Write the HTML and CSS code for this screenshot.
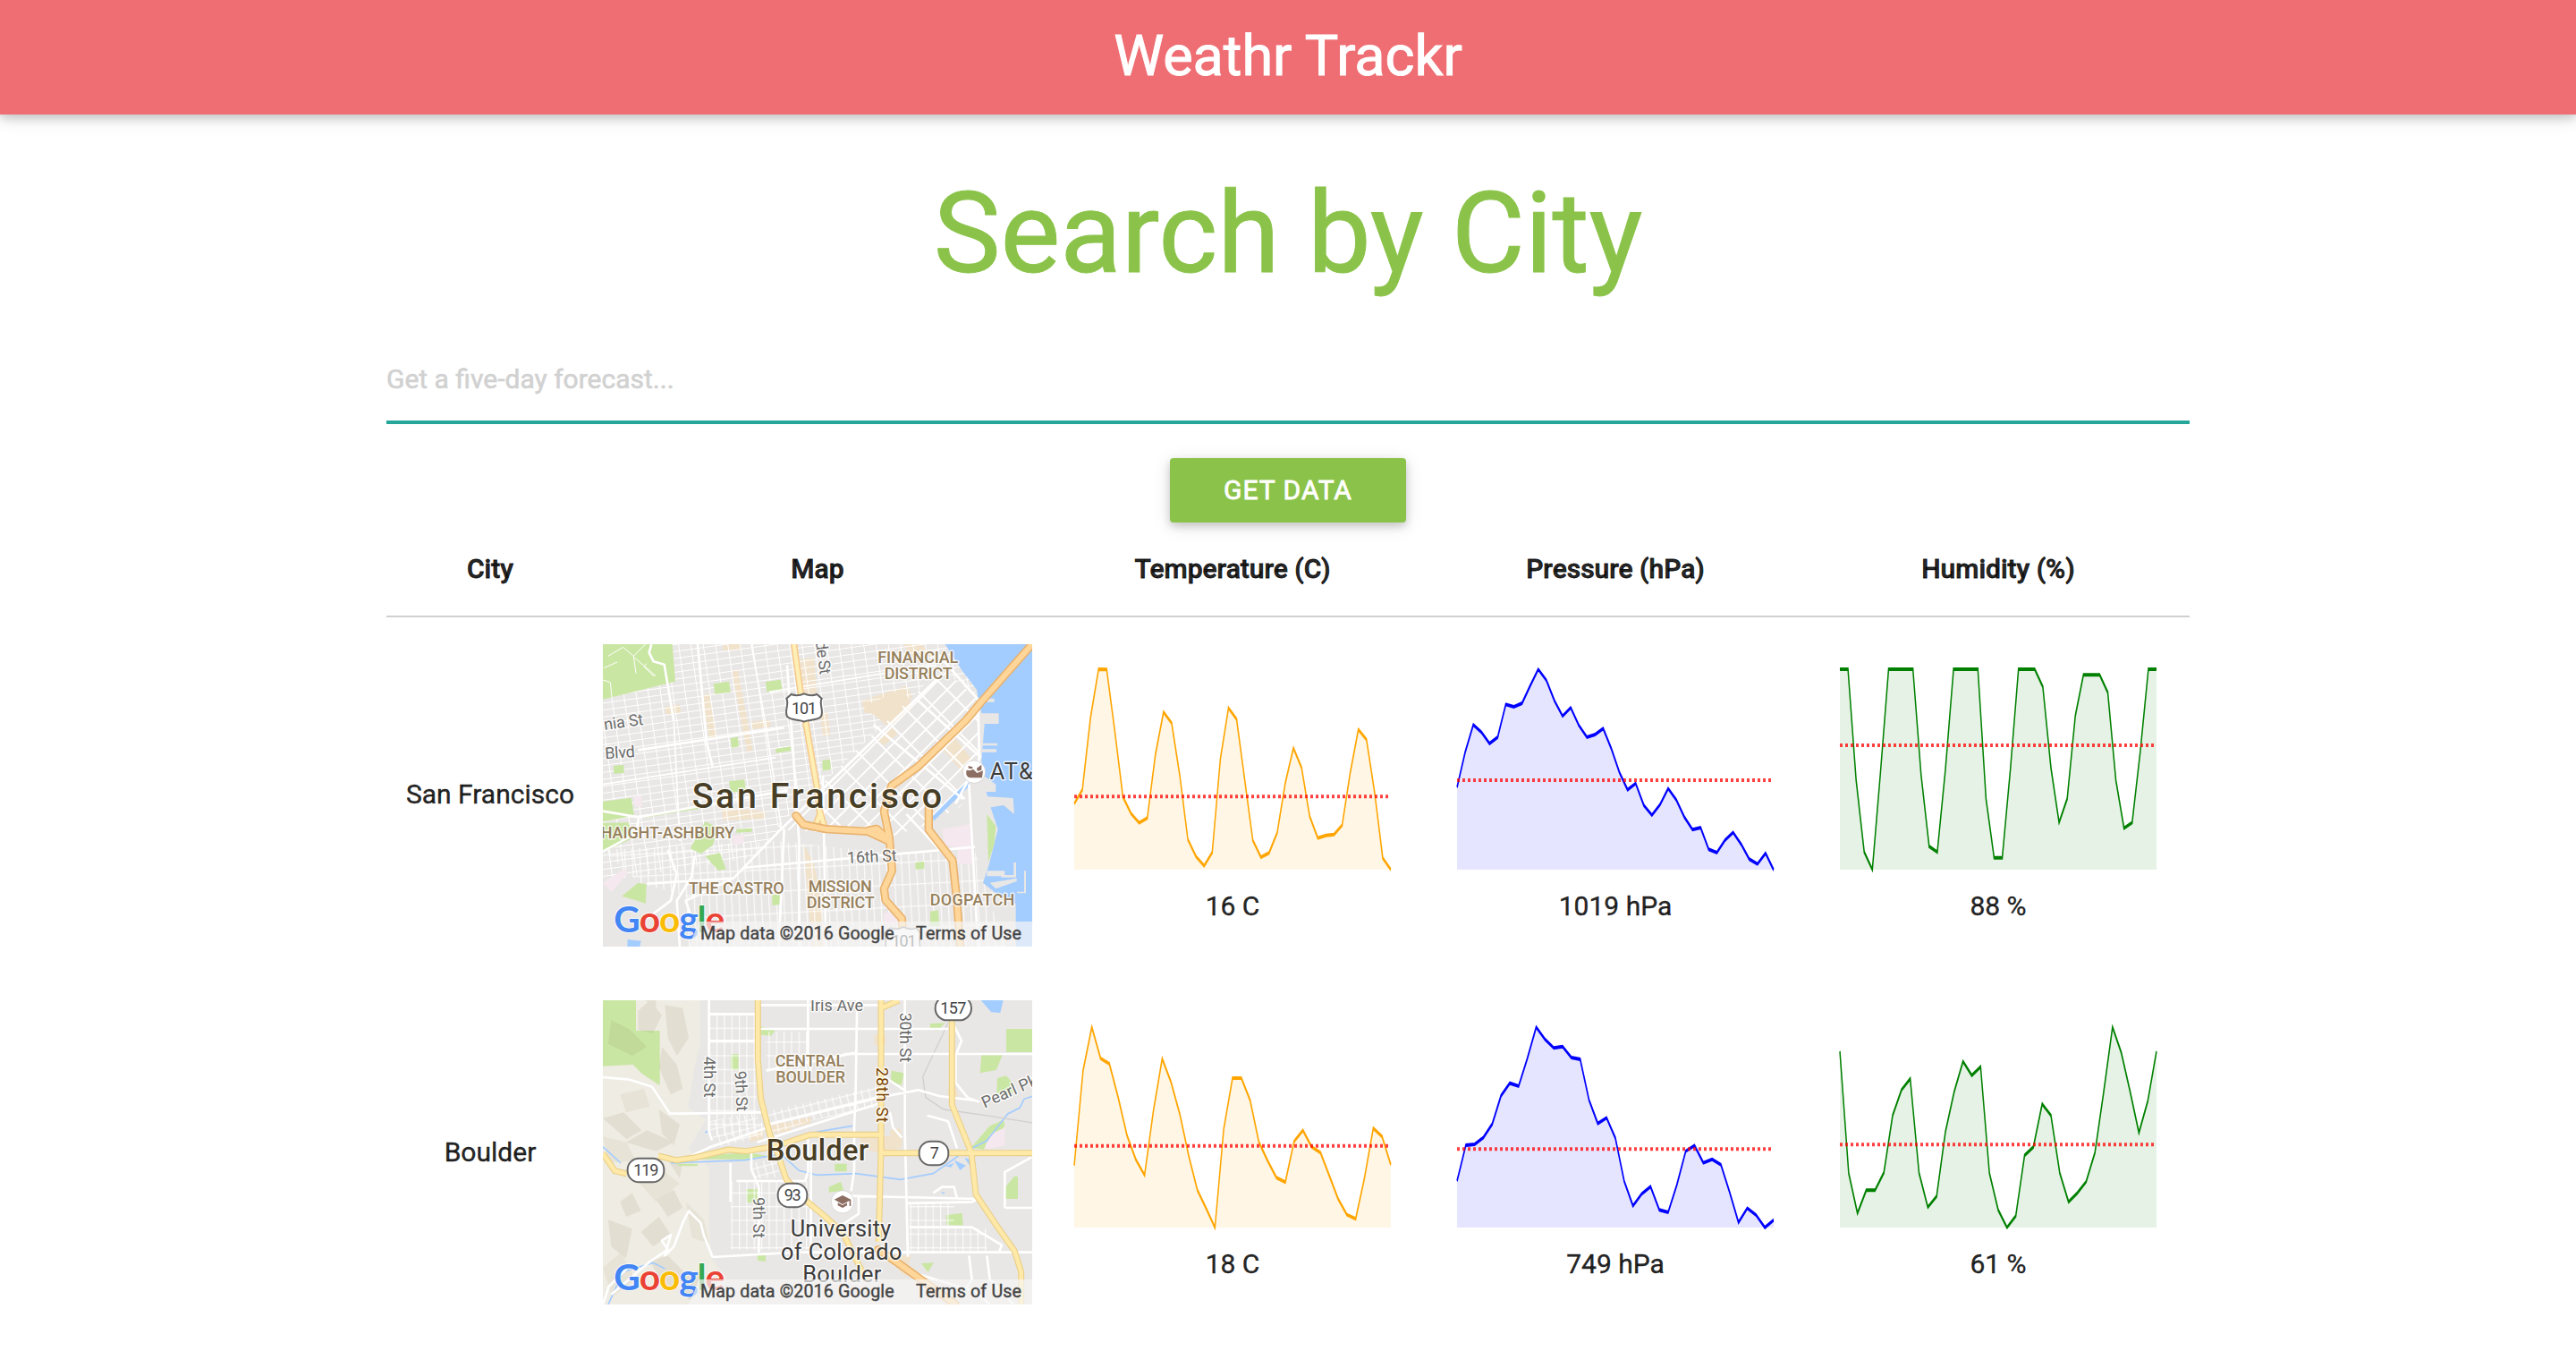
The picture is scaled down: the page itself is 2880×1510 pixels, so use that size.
FILE: index.html
```html
<!DOCTYPE html>
<html lang="en">
<head>
<meta charset="utf-8">
<title>Weathr Trackr</title>
<link rel="stylesheet" href="styles.css">
</head>
<body>
<header class="nav"><a class="brand">Weathr Trackr</a></header>
<main class="container">
  <h1 class="title">Search by City</h1>
  <form class="search">
    <input class="search-input" type="text" placeholder="Get a five-day forecast...">
    <button class="btn" type="button">Get Data</button>
  </form>
  <section class="table">
    <div class="row head">
      <div>City</div><div>Map</div><div>Temperature (C)</div><div>Pressure (hPa)</div><div>Humidity (%)</div>
    </div>
    <div class="row">
      <div class="city">San Francisco</div>
      <div class="map map-first">
        <svg class="map-svg" viewBox="42 30 1440 1014" preserveAspectRatio="none">
          <defs>
            <pattern id="gridNW" width="41" height="23" patternUnits="userSpaceOnUse" patternTransform="rotate(-8)"><path d="M0 1.5H41M1.5 0V23" class="street"/></pattern>
            <pattern id="gridSoma" width="72" height="44" patternUnits="userSpaceOnUse" patternTransform="translate(1000 500) rotate(-45)"><path d="M0 3H72M3 0V44" class="street mid"/></pattern>
            <pattern id="gridS" width="25" height="74" patternUnits="userSpaceOnUse" patternTransform="rotate(-3)"><path d="M0 2H25M2 0V74" class="street"/></pattern>
          </defs>
          <rect x="42" y="30" width="1440" height="1014" fill="#e9e7e5"/>
          <g fill="#f1e2cb">
            <path d="M445 30h60v20h-60zM375 200l25-5 25 150-25 5zM475 120l20-4 50 270-20 4zM250 240l50-8 4 28-50 5zM910 220l150-50 60 100-40 30-70-30-90-10zM705 80l45-5 10 120-45 5zM770 260l25-4 10 80-25 4zM880 410l50-40 25 20-50 40zM1170 370l50-30 70 90-40 40zM440 580l150 10-5 25-140 5zM715 700l15 200 15 144 40 0-15-180-20-100zM540 290l60-8 5 25-60 8zM960 340l40-30 20 20-40 35zM1050 30h60l40 40-60 20z"/>
          </g>
          <path d="M42 30h1200l60 185-660 430-90 100-510 80z" fill="url(#gridNW)"/>
          <path d="M42 720l580-30 380 40 290 0 40 140 60 174H330l-10-170-150-40z" fill="url(#gridS)"/>
          <path d="M620 650L1180 110l120 105 10 250-70 110-110 60-120 40z" fill="#e9e7e5"/>
          <path d="M915 240l130-60 40 60-80 70zM960 350l50-40 20 20-45 40zM1170 370l50-30 70 90-40 30z" fill="#f1e2cb"/>
          <path d="M620 650L1180 110l120 105 10 250-70 110-110 60-120 40z" fill="url(#gridSoma)"/>
          <g fill="#cae6a3">
            <path d="M42 30H275l10 125L42 215zM413 163l52-8 5 36-52 6zM588 156l50-7 6 38-52 3zM470 345l24-4 4 32-24 5zM78 438l34-4 1 28-34 3zM778 420l26-4 3 34-28 4zM465 490l52-6 4 40-50 2zM622 381l50-8v14l-50 8zM42 557l95-12 10 60-105 20zM42 630l85-2 20 50-105 50zM335 715l50-90 45 20-20 60-40 28zM385 740l50-10 20 55-25 4zM105 875l55-45 28 5-2 65-28-10zM610 870l30-2v34l-30 4zM1140 926l27-4 3 54-30-2zM1090 762l30-3v24l-29 2zM490 650l52-3v12l-52 3zM175 606l200-34v8l-200 33z"/>
          </g>
          <g fill="#f5e8ee"><path d="M478 672l36-4v30l-36 4zM1180 650l95-16v80l-85-6zM1232 712l48 2v55l-48-2zM42 830l70-45 15 10-55 65zM985 930h30l25 45h-55zM147 540l24-3 3 35-25 3z"/></g>
          <path d="M1190 30l58 90 48 62 6 38 20 80-10 120 10 80 15 60 30 90-30 120-20 60 50 40 60 30v144h55V30z" fill="#a3ccff"/>
          <path d="M1145 610l120-120 8 14-120 118z" fill="#a3ccff"/>
          <g fill="#e9e7e5"><path d="M1300 212h55v12h-55zM1305 262h65v35h-60zM1310 362h55v8h-55zM1310 382h52v10h-52zM1290 450l70 50v25h-70zM1320 540l98 6 4 54-36-30-60 10zM1330 790l60 0v18h-60zM1420 762h8v50h-50v-8h42zM1340 830l90-15v10l-70 25zM1455 790h6v75h-30v-5h24z"/></g>
          <path d="M1330 600l30 40-5 60-20 60z" fill="#cae6a3"/>
          <path d="M125 1020l45 5-4 19h-42z" fill="#a3ccff"/>
          <g class="street"><path d="M60 70l50-30M90 90l-45 20M110 40l35 30 40-40M145 70l8 58M148 75l70 60-8 0-30-30 8-10M42 150l25 8 5 50"/></g>
          <g class="road">
            <path d="M42 590l120 20 500-90M160 385l490-75M360 30l30 330 20 80M42 725l110-60 10-50M205 30l-8 28 15 30 36 10 32 190M480 815l-290 18M640 650L1180 130M640 650L480 815l-160 75 20 60M510 780l780-70M1180 80l120 135M1300 215l5 200-80 150M1270 500l30 544M780 470l10 574M660 100l20 290 20 300 0 354M1060 600l150 160M950 300l300 250M1100 220l210 190M260 720l30 80-20 90-80 60M350 740l-10 70-50 80 10 154M650 650l-18 394"/>
          </g>
          <g class="road minor"><path d="M540 30l50 280 50 330M280 290l20 400M42 500l580-90M600 190l560-90"/></g>
          <g class="rampline"><path d="M683 30l22 160 17 100 38 220 10 90-15 40M770 590l20 70"/></g>
          <g class="rampfill"><path d="M683 30l22 160 17 100 38 220 10 90-15 40M770 590l20 70"/></g>
          <g class="hwyline"><path d="M1482 30L1310 225 1260 285 1100 440 1010 505 985 590 1003 680 1012 790 985 850 990 888 1045 950 1047 978"/><path d="M690 605l25 30 75 15 140 8 70 32M930 655l30-6 40 34M1135 580v72l80 103 14 130 12 159"/></g>
          <g class="hwyfill"><path d="M1482 30L1310 225 1260 285 1100 440 1010 505 985 590 1003 680 1012 790 985 850 990 888 1045 950 1047 978"/><path d="M690 605l25 30 75 15 140 8 70 32M930 655l30-6 40 34M1135 580v72l80 103 14 130 12 159"/></g>
          <path d="M674 198q20 8 43-2 23 10 43 2l16 14c-10 18 8 42-2 60-10 14-42 10-57 18-15-8-47-4-57-18-10-18 8-42-2-60z" fill="#fff" stroke="#666" stroke-width="6"/>
          <text x="675" y="265" textLength="84" class="shield">101</text>
          <g class="lbl street-name">
            <text transform="translate(48 318) rotate(-8)" textLength="133">nia St</text>
            <text transform="translate(50 415) rotate(-4)" textLength="101">Blvd</text>
            <text transform="translate(755 22) rotate(82)" textLength="112">de St</text>
            <text transform="translate(862 765) rotate(-3)" textLength="167">16th St</text>
          </g>
          <g class="lbl area">
            <text x="964" y="94" textLength="270">FINANCIAL</text>
            <text x="986" y="148" textLength="228">DISTRICT</text>
            <text x="35" y="682" textLength="448">HAIGHT-ASHBURY</text>
            <text x="330" y="868" textLength="320">THE CASTRO</text>
            <text x="731" y="861" textLength="213">MISSION</text>
            <text x="725" y="915" textLength="228">DISTRICT</text>
            <text x="1139" y="907" textLength="284">DOGPATCH</text>
          </g>
          <text x="341" y="578" textLength="838" class="lbl city-big">San Francisco</text>
          <circle cx="1287" cy="458" r="38" fill="#fff" stroke="#ccc" stroke-width="2"/>
          <path d="M1262 452c-5 20 5 26 18 26h34l3-24-20 8-12-12-14 4zM1268 438l14 4v6l-14-2zM1296 446l16-12v18l-14 4z" fill="#8d6e63"/>
          <text x="1340" y="482" textLength="144" class="lbl poi">AT&amp;</text>
          <path d="M990 1044q4-30-4-44 10-14 20-18 22 8 44-4 22 12 44 4l14 18q-6 14-2 44" fill="#fff" stroke="#888" stroke-width="5"/>
          <text x="1010" y="1044" textLength="84" class="shield">101</text>
          <text x="79" y="996" textLength="372" class="logo"><tspan fill="#4285f4">G</tspan><tspan fill="#ea4335">o</tspan><tspan fill="#fbbc05">o</tspan><tspan fill="#4285f4">g</tspan><tspan fill="#34a853">l</tspan><tspan fill="#ea4335">e</tspan></text>
          <path d="M365 960H1482v84H330z" fill="#f5f5f5" opacity=".7"/>
          <g class="credit"><text x="369" y="1019" textLength="650">Map data ©2016 Google</text><text x="1092" y="1019" textLength="354">Terms of Use</text></g>
        </svg>
      </div>
      <div class="chart"><svg class="spark orange" data-series="sfTemp"></svg><p>16 C</p></div>
      <div class="chart"><svg class="spark blue" data-series="sfPres"></svg><p>1019 hPa</p></div>
      <div class="chart"><svg class="spark green" data-series="sfHum"></svg><p>88 %</p></div>
    </div>
    <div class="row">
      <div class="city">Boulder</div>
      <div class="map">
        <svg class="map-svg" viewBox="42 24 1440 1020" preserveAspectRatio="none">
          <defs>
            <pattern id="gridB" width="25" height="46" patternUnits="userSpaceOnUse" patternTransform="translate(398 70)"><path d="M0 2H25M2 0V46" class="street"/></pattern>
            <pattern id="gridD" width="25" height="27" patternUnits="userSpaceOnUse" patternTransform="rotate(-14)"><path d="M0 2H25M2 0V27" class="street"/></pattern>
          </defs>
          <rect x="42" y="24" width="1440" height="1020" fill="#e9e7e5"/>
          <path d="M42 24H368l0 150-20 80-20 130 60 40-60 100 70 60v200l10 110 50 60-50 90H42z" fill="#efece4"/>
          <path d="M42 24h111v102h80v184l-60-40-30-30-101 5z" fill="#cae6a3"/>
          <g fill="#8a8460" opacity=".13">
            <path d="M160 60l40-36 40 50-30 60-50-10zM250 40l60 10 20 100-40 60-30-60zM240 180l50 60 20 80-40 20-40-90zM70 90l60 30 60 60-50 30-80-40zM42 420l70-20 60 60-50 30zM120 500l70-40 90 40-60 30zM230 390l70 50-20 70-40-40zM60 760l80 30-20 100-50-40zM170 800l60-50 40 60-60 40zM220 690l60-30 30 60-50 30zM200 900l60-20 60 60-60 60zM300 960l60-30 40 60-70 40zM100 700l40-30 30 60-50 20zM260 560l50 0-10 60zM180 20h40v30z"/>
          </g>
          <g fill="#e4dfd2" opacity=".7"><path d="M42 480l80 20 30 60-90 10zM150 620l90-30 60 50-80 60zM320 700l60 60 20 80-60-20zM100 340l80-20 20 60-80 20zM42 920l60-50 50 90-80 60z"/></g>
          <path d="M1310 24l35 40 30 2 10-42zM1415 190l15-22v20z" fill="#a3ccff"/>
          <g fill="#cae6a3"><path d="M570 112l50 14-15 18-35-5zM471 204h26v54h-26zM1010 260l42 8-8 40-36-10zM820 572h40v26h-40zM524 657h36v45h-36zM1140 102l50-2-25 26-25-5zM1395 120h87v78h-87zM1312 208h70l-20 50-55 10zM1365 285l30-8 26 30-8 34h-50zM1392 650l30-36h12v76h-42zM1193 745l54-8 3 42-55-2zM1110 906l42-2-20 32zM558 873h30v27l-26-3zM1275 520l65-75 46-20 4 20-60 80zM285 572h75v8h-60zM360 545l170-10 60 10-70 12H360zM800 650l40-18 10 30-50 6z"/></g>
          <path d="M1320 525l20-50 50-24v60z" fill="#f5e8ee"/>
          <g fill="#f1e2cb"><path d="M952 140l38 0v32l-38 2zM905 480h140v36l-60 24-80-20zM1005 458l36-4v50l-36-4zM530 470l50-12v30l-45 12zM605 432l60 0 10 30-60 10zM670 430l70-15v22l-70 15zM1010 880h66l-20 70-50-50zM1197 330l18-40 20 50-20 40z"/></g>
          <path d="M398 70H558V400l40 80H398z" fill="url(#gridB)"/>
          <path d="M590 130H730V260H590zM470 630H740V860H470zM1070 700h150v90h-150zM1070 790h260v80h-260z" fill="url(#gridB)"/>
          <path d="M580 400l310-70 80-20v70l-240 50-130 50zM398 430l160-30 20 80-160 40zM540 570l80-15 20 60-90 10zM390 470l20 30z" fill="url(#gridD)"/>
          <g class="water-line"><path d="M42 515l60 55M270 570l250-10 120-20 60 55 60 15 130-5 150 20 110-20 100-70 80-40 70-90 40-20 15-30 45-15M760 465l120-20M60 1044l50-110 100-30 40 20M385 468l10-6"/></g>
          <path d="M1190 580l30-10-10 14zM1220 560l40 18-20 16zM1255 552l28 8-8 22zM1178 665l14 6-12 2z" fill="#a3ccff"/>
          <g class="rail"><path d="M1200 100l-85 180 10 70 60 40 140 20 160 25"/></g>
          <g class="road">
            <path d="M42 282l90 8 75 24 60 90 40 0 270-4M398 24v440l10 30M398 70h160M398 160h160M570 40h400M895 24l-5 300-5 130 0 140-10 70M730 24v180l10 60M560 120h400M850 204h632M590 260l300-60M600 440l370-90 130-25 70 20 120 15M340 545l60-28 190-65M560 500l410-130M730 470v130l-10 30-230 0M470 570v130M540 530v60l25 60v220M410 885l280-16h792M410 885l-30-75-10-40-40-40-20 40-30 80-30 30 20-70-30 20 20 30-60 40-70 60-60 50M1055 24v440l10 420M870 680l430 10-20 10-220 5M970 270l90 60M1215 100l30 60-20 50v90l40 50 40 15M1005 400l10 50 30 35M1150 670l30-20 40 0 10 40M1390 720V600l90-50M1390 720h92M1070 785h210l100 60-10 25M900 680v60l-60 40M1130 410l70 20 20 60 10 30M740 870V560M960 120h240M1270 880l10 80-40 60M1090 940l200 60 50 44M1330 880l10 80 80 84M42 1044l20-60 60-60"/>
          </g>
          <g class="yline"><path d="M562 24v200l10 130 30 120 25 60 30 90 70 75 60 50 60 55 80 160M975 24v500l-8 310M228 546l60 14 60-8 115-27 60 5 100-17 115-38h245M42 538l40 58 40 10M975 536h507M1213 90v285l65 160 15 140 70 105 60 85 22 70v109M975 50l60-26"/></g>
          <g class="yfill"><path d="M562 24v200l10 130 30 120 25 60 30 90 70 75 60 50 60 55 80 160M975 24v500l-8 310M228 546l60 14 60-8 115-27 60 5 100-17 115-38h245M42 538l40 58 40 10M975 536h507M1213 90v285l65 160 15 140 70 105 60 85 22 70v109M975 50l60-26"/></g>
          <path d="M965 860l60 40 200 144" class="hwyline"/><path d="M965 860l60 40 200 144" class="hwyfill"/>
          <g fill="#fff" stroke="#666" stroke-width="6">
            <rect x="1157" y="10" width="121" height="81" rx="40"/><rect x="1103" y="497" width="98" height="80" rx="38"/><rect x="125" y="554" width="122" height="80" rx="38"/><rect x="629" y="638" width="98" height="80" rx="38"/>
          </g>
          <g class="shield"><text x="1174" y="70" textLength="87">157</text><text x="1139" y="555">7</text><text x="145" y="612" textLength="84">119</text><text x="650" y="696" textLength="57">93</text></g>
          <g class="lbl street-name">
            <text x="738" y="59" textLength="177">Iris Ave</text>
            <text transform="translate(380 212) rotate(90)" textLength="138">4th St</text>
            <text transform="translate(484 262) rotate(87)" textLength="135">9th St</text>
            <text transform="translate(545 684) rotate(90)" textLength="138">9th St</text>
            <text transform="translate(1039 65) rotate(90)" textLength="167">30th St</text>
            <text transform="translate(1322 386) rotate(-24)">Pearl Pk</text>
            <text transform="translate(959 249) rotate(90)" textLength="185" class="brown">28th St</text>
          </g>
          <g class="lbl area"><text x="620" y="246" textLength="233">CENTRAL</text><text x="622" y="300" textLength="233">BOULDER</text></g>
          <text x="590" y="562" textLength="344" class="lbl city-mid">Boulder</text>
          <circle cx="846" cy="700" r="38" fill="#fff" stroke="#ccc" stroke-width="2"/>
          <path d="M818 692l28-14 28 14v22h-5v-18l-23 12zM830 703l16 8 15-8v9l-15 8-16-8z" fill="#8d6e63"/>
          <g class="lbl poi"><text x="671" y="815" textLength="338">University</text><text x="639" y="893" textLength="406">of Colorado</text><text x="712" y="970" textLength="264">Boulder</text></g>
          <text x="79" y="996" textLength="372" class="logo"><tspan fill="#4285f4">G</tspan><tspan fill="#ea4335">o</tspan><tspan fill="#fbbc05">o</tspan><tspan fill="#4285f4">g</tspan><tspan fill="#34a853">l</tspan><tspan fill="#ea4335">e</tspan></text>
          <path d="M365 960H1482v84H330z" fill="#f5f5f5" opacity=".7"/>
          <g class="credit"><text x="369" y="1019" textLength="650">Map data ©2016 Google</text><text x="1092" y="1019" textLength="354">Terms of Use</text></g>
        </svg>
      </div>
      <div class="chart"><svg class="spark orange" data-series="boTemp"></svg><p>18 C</p></div>
      <div class="chart"><svg class="spark blue" data-series="boPres"></svg><p>749 hPa</p></div>
      <div class="chart"><svg class="spark green" data-series="boHum"></svg><p>61 %</p></div>
    </div>
  </section>
</main>
<script src="charts.js"></script>
</body>
</html>
```
FILE: styles.css
```css
* { box-sizing: border-box; }
body {
  margin: 0;
  background: #fff;
  font-family: Roboto, "Liberation Sans", sans-serif;
  font-size: 30px;
  line-height: 45px;
  color: rgba(0, 0, 0, 0.87);
  -webkit-text-stroke: .4px currentColor;
}
.nav {
  height: 128px;
  display: flex;
  justify-content: center;
  background: #ee6e73;
  box-shadow: 0 4px 10px 0 rgba(0,0,0,.16), 0 4px 20px 0 rgba(0,0,0,.12);
}
.brand { color: #fff; font-size: 63px; line-height: 126px; -webkit-text-stroke-width: 1px; }
.container { width: 2016px; margin: 0 auto; }
.title {
  margin: 64px 0 49px;
  font-size: 126px;
  line-height: 139px;
  font-weight: 400;
  text-align: center;
  color: #8bc34a;
  -webkit-text-stroke-width: 1px;
}
.search { display: flex; flex-direction: column; align-items: center; }
.search-input {
  width: 100%;
  height: 92px;
  margin: 0 0 40px;
  padding: 0 0 4px;
  border: 0;
  border-bottom: 2px solid #26a69a;
  box-shadow: 0 2px 0 0 #26a69a;
  font: inherit;
  outline: none;
}
.search-input::placeholder { color: #d1d1d1; opacity: 1; -webkit-text-stroke: .6px #d1d1d1; }
.btn {
  width: 264px;
  height: 72px;
  padding: 0;
  border: 0;
  border-radius: 4px;
  background: #8bc34a;
  color: #fff;
  font: 400 30px/72px Roboto, "Liberation Sans", sans-serif;
  letter-spacing: 1px;
  text-transform: uppercase;
  -webkit-text-stroke: .8px #fff;
  box-shadow: 0 4px 10px 0 rgba(0,0,0,.16), 0 4px 20px 0 rgba(0,0,0,.12);
}
.row {
  display: grid;
  grid-template-columns: 232px 500px repeat(3, 428px);
  height: 400px;
  text-align: center;
}
.head {
  height: 106px;
  padding-top: 29px;
  margin-bottom: -2px;
  border-bottom: 2px solid #d0d0d0;
  font-weight: 500;
  -webkit-text-stroke-width: .8px;
}
.city { line-height: 400px; }
.map { padding: 30px 10px; }
.map-first { padding-top: 32px; }
.map-svg { display: block; width: 480px; height: 100%; overflow: hidden; -webkit-text-stroke: 0; }
.chart { padding-top: 52px; }
.chart p { margin: 10px 0 0; }
.spark { display: block; width: 360px; height: 240px; margin: 0 auto; }
.orange { color: orange; }
.blue { color: blue; }
.green { color: green; }

.street { fill: none; stroke: #fff; stroke-width: 3; }
.street.mid { stroke-width: 6; }
.road { fill: none; stroke: #fff; stroke-width: 8; stroke-linejoin: round; }
.road.minor { stroke-width: 5; }
.rail { fill: none; stroke: #cfcfcf; stroke-width: 4; }
.water-line { fill: none; stroke: #a3ccff; stroke-width: 5; }
.rampline { fill: none; stroke: #f6c98c; stroke-width: 22; }
.rampfill { fill: none; stroke: #ffefb5; stroke-width: 13; }
.hwyline { fill: none; stroke: #e9b36f; stroke-width: 28; stroke-linecap: round; stroke-linejoin: round; }
.hwyfill { fill: none; stroke: #ffd699; stroke-width: 18; stroke-linecap: round; stroke-linejoin: round; }
.yline { fill: none; stroke: #ead08a; stroke-width: 21; stroke-linejoin: round; }
.yfill { fill: none; stroke: #ffe9a8; stroke-width: 14; stroke-linejoin: round; }
.lbl { paint-order: stroke; stroke: rgba(255,255,255,.75); stroke-width: 9px; stroke-linejoin: round; }
.street-name { font-size: 54px; fill: #6b6b6b; }
.brown { fill: #7a4300; }
.area { font-size: 54px; font-weight: 500; fill: #96805b; }
.city-big { font-size: 118px; font-weight: 500; fill: #483e26; }
.city-mid { font-size: 98px; font-weight: 500; fill: #483e26; }
.poi { font-size: 76px; fill: #3c3c3c; }
.shield { font-size: 54px; fill: #444; }
.logo { font-family: Lato, sans-serif; font-size: 122px; font-weight: 700; paint-order: stroke; stroke: rgba(255,255,255,.7); stroke-width: 6px; }
.credit { font-size: 59px; fill: #444; stroke: #444; stroke-width: 1.2px; }
```
FILE: charts.js
```js
// Each series lists distances below the top edge; 84 is the peak and 756 the base.
const series = {
  sfTemp: { mean: 511, d: [535,488,247,84,85,292,512,568,599,583,370,228,265,440,655,712,743,698,385,214,252,455,658,714,700,632,465,348,414,577,650,641,638,607,430,286,320,497,717,756] },
  sfPres: { mean: 456, d: [480,362,270,295,333,312,202,210,198,140,84,121,190,241,213,272,312,303,283,350,430,488,467,540,573,538,484,522,580,622,615,688,699,657,631,671,721,737,701,757] },
  sfHum: { mean: 339, d: [84,84,455,697,756,430,84,84,84,84,437,678,697,420,84,84,84,84,518,716,716,420,84,84,84,143,415,598,518,240,103,103,103,162,457,617,598,360,84,84] },
  boTemp: { mean: 482, d: [548,230,84,189,207,320,447,528,580,365,190,268,375,513,630,692,756,425,255,255,329,470,533,589,604,467,430,486,505,582,660,713,727,590,423,451,546] },
  boPres: { mean: 493, d: [600,480,477,454,409,314,272,282,188,84,125,154,149,186,192,328,407,388,456,600,683,643,619,697,705,612,500,481,539,527,545,638,739,691,714,756,731] },
  boHum: { mean: 478, d: [165,573,708,631,631,572,380,295,257,573,688,651,435,300,199,246,217,573,697,756,717,514,486,342,380,573,670,640,602,505,300,84,170,300,438,333,165] }
};
const toY = v => (v / 12 - 5).toFixed(2);
document.querySelectorAll('.spark').forEach(svg => {
  const { mean, d } = series[svg.dataset.series];
  const pts = d.map((v, i) => (2 + i * 236 / (d.length - 1)).toFixed(2) + ',' + toY(v)).join(' ');
  svg.setAttribute('viewBox', '0 0 240 60');
  svg.setAttribute('preserveAspectRatio', 'none');
  svg.innerHTML =
    `<polygon points="${pts} 238,58 2,58" fill="currentColor" fill-opacity=".1"/>` +
    `<polyline points="${pts}" fill="none" stroke="currentColor"/>` +
    `<line x1="2" x2="238" y1="${toY(mean)}" y2="${toY(mean)}" stroke="red" stroke-opacity=".75" stroke-dasharray="2,2"/>`;
});
```
